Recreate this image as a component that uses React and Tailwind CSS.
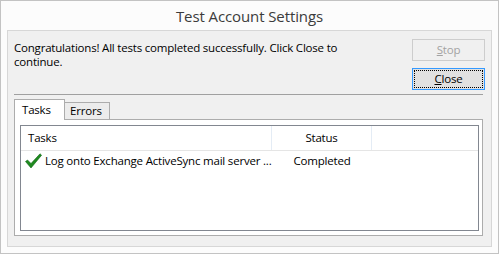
import React from 'react';

const font = { fontFamily: '"Open Sans", "Noto Sans", sans-serif' };

// Green tick used in the task list
const CheckIcon = () => (
  <svg width="17" height="16" viewBox="0 0 17 16" className="shrink-0">
    <path d="M0.5 8.5 L2.5 7 L6 10.5 L15 0.8 L16.6 2.2 L6 15 Z" fill="#1e8a1e" stroke="#12661a" strokeWidth="0.6" strokeLinejoin="round" />
  </svg>
);

const App = () => {
  return (
    <div
      className="w-[499px] h-[254px] bg-[#fcfcfc] border border-[#c3c3c3] flex flex-col text-[11.5px] tracking-[-0.2px] text-black"
      style={font}
    >
      {/* Title */}
      <div className="h-[29px] flex items-center justify-center text-[15px] tracking-[-0.1px] text-[#3b3b3b] pt-[2px]">
        Test Account Settings
      </div>

      {/* Dialog panel */}
      <div className="mx-[6px] h-[217px] border border-[#d7d7d7] bg-[#f0f0f0] flex flex-col">
        {/* Message + buttons */}
        <div className="flex h-[63px]">
          <div className="flex-1 pl-[6px] pt-[10px] leading-[14px]">
            <div>Congratulations! All tests completed successfully. Click Close to</div>
            <div>continue.</div>
          </div>
          <div className="w-[73px] mr-[6px] pt-[8px] flex flex-col gap-[7px]">
            <div className="h-[22px] border border-[#cdcdcd] bg-[#f0f0f0] flex items-center justify-center text-[#a3a3a3]">
              <span><span className="underline">S</span>top</span>
            </div>
            <div className="h-[22px] border border-[#3399ff] bg-[#e1e1e1] p-[1px]">
              <div className="h-full border border-dotted border-black flex items-center justify-center">
                <span><span className="underline">C</span>lose</span>
              </div>
            </div>
          </div>
        </div>

        {/* Separator */}
        <div className="ml-[6px] w-[469px] h-px bg-[#a0a0a0]" />

        {/* Tabs */}
        <div className="ml-[6px] w-[469px] mt-[4px] flex flex-col">
          <div className="flex items-end h-[20px]">
            <div className="w-[51px] h-[21px] -mb-px border border-b-0 border-[#acacac] bg-white relative z-10 pl-[7px] pt-[1px]">
              Tasks
            </div>
            <div className="w-[45px] h-[17px] border border-l-0 border-b-0 border-[#acacac] bg-[#ececec] pl-[5px] leading-[16px]">
              Errors
            </div>
          </div>
          <div className="h-[117px] border border-[#acacac] bg-white pl-[5px] pr-[3px] pt-[5px]">
            <div className="w-[459px] h-[106px] border border-[#828790] bg-white flex flex-col">
              {/* Header */}
              <div className="h-[25px] flex border-b border-[#e5e5e5]">
                <div className="w-[251px] pl-[7px] flex items-center border-r border-[#e4ecf5]">Tasks</div>
                <div className="w-[100px] flex items-center justify-center border-r border-[#e4ecf5]">Status</div>
              </div>
              {/* Row */}
              <div className="h-[19px] flex items-center">
                <div className="w-[251px] pl-[4px] flex items-center gap-[3px] overflow-hidden whitespace-nowrap">
                  <CheckIcon />
                  <span>Log onto Exchange ActiveSync mail server ...</span>
                </div>
                <div className="w-[100px] text-center">Completed</div>
              </div>
            </div>
          </div>
        </div>
      </div>
    </div>
  );
};

export default App;
